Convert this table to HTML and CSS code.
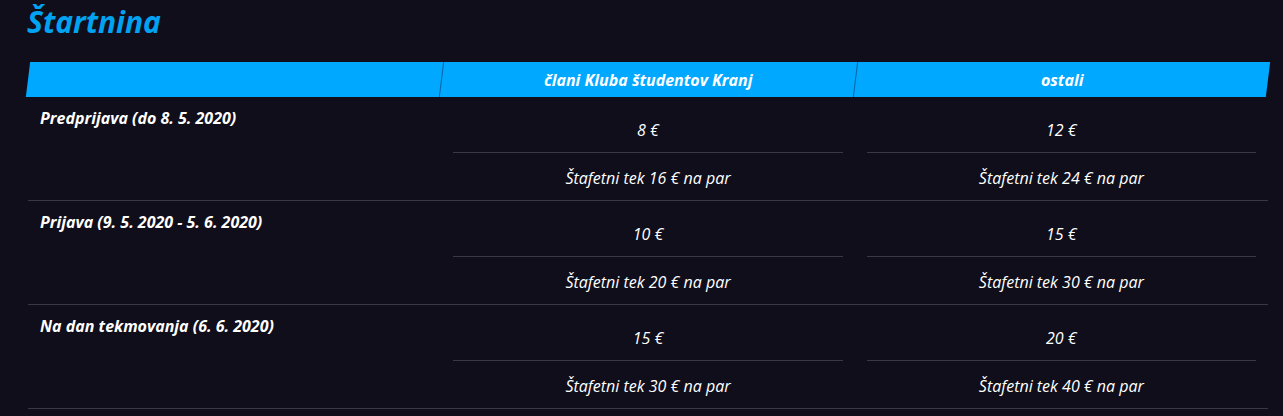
FILE: index.html
```html
<!DOCTYPE html>
<html lang="sl">
<head>
<meta charset="utf-8">
<link rel="stylesheet" href="styles.css">
</head>
<body>
<section class="fees">
  <h2 class="title">Štartnina</h2>
  <div class="table">
    <div class="thead">
      <div class="th"></div>
      <div class="th"><span>člani Kluba študentov Kranj</span></div>
      <div class="th"><span>ostali</span></div>
    </div>
    <div class="row">
      <div class="label">Predprijava (do 8. 5. 2020)</div>
      <div class="prices">
        <div class="price main">8 €</div>
        <div class="price relay">Štafetni tek 16 € na par</div>
      </div>
      <div class="prices">
        <div class="price main">12 €</div>
        <div class="price relay">Štafetni tek 24 € na par</div>
      </div>
    </div>
    <div class="row">
      <div class="label">Prijava (9. 5. 2020 - 5. 6. 2020)</div>
      <div class="prices">
        <div class="price main">10 €</div>
        <div class="price relay">Štafetni tek 20 € na par</div>
      </div>
      <div class="prices">
        <div class="price main">15 €</div>
        <div class="price relay">Štafetni tek 30 € na par</div>
      </div>
    </div>
    <div class="row">
      <div class="label">Na dan tekmovanja (6. 6. 2020)</div>
      <div class="prices">
        <div class="price main">15 €</div>
        <div class="price relay">Štafetni tek 30 € na par</div>
      </div>
      <div class="prices">
        <div class="price main">20 €</div>
        <div class="price relay">Štafetni tek 40 € na par</div>
      </div>
    </div>
  </div>
</section>
</body>
</html>
```
FILE: styles.css
```css
html, body {
  margin: 0;
  padding: 0;
  background: #0f0e1a;
  height: 100%;
}
body {
  font-family: "Open Sans", "Noto Sans", sans-serif;
  color: #ffffff;
  overflow: hidden;
}
.fees {
  padding: 4px 15px 0 28px;
}
.title {
  margin: 0 0 22px -1px;
  font-size: 30px;
  line-height: 36px;
  font-weight: 700;
  font-style: italic;
  color: #00a3f2;
}
.thead {
  display: grid;
  grid-template-columns: repeat(3, 1fr);
  height: 35px;
  background: #00a8ff;
  transform: skewX(-7deg);
}
.th {
  display: flex;
  align-items: center;
  justify-content: center;
  border-left: 1px solid rgba(15, 40, 90, 0.55);
}
.th:first-child {
  border-left: none;
}
.th span {
  display: block;
  transform: skewX(7deg);
  font-size: 16px;
  font-weight: 700;
  font-style: italic;
  line-height: 22px;
}
.row {
  display: grid;
  grid-template-columns: repeat(3, 1fr);
  border-bottom: 1px solid #393846;
}
.label {
  padding: 10px 12px 0 12px;
  font-size: 16px;
  line-height: 22px;
  font-weight: 700;
  font-style: italic;
}
.prices {
  display: flex;
  flex-direction: column;
  padding: 0 12px;
}
.price {
  text-align: center;
  font-size: 16px;
  line-height: 22px;
  font-style: italic;
}
.price.main {
  padding: 22px 0 11px;
  border-bottom: 1px solid #393846;
}
.price.relay {
  padding: 14px 0 11px;
}
```
